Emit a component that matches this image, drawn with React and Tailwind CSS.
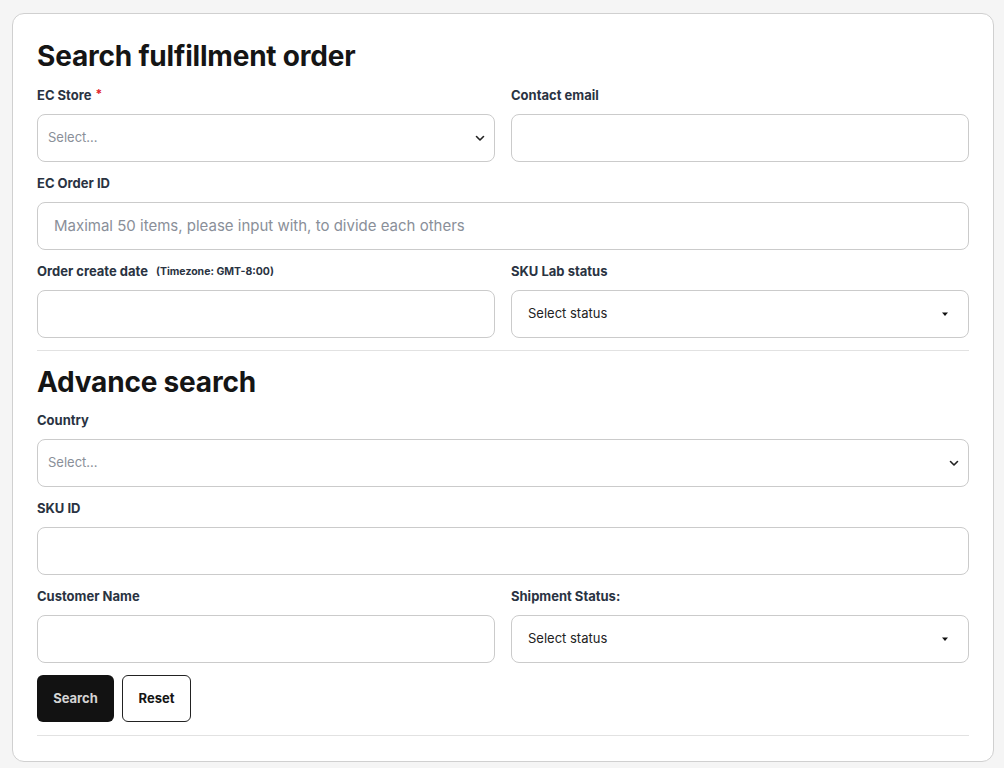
import React from "react";

const font = { fontFamily: "Inter, 'Noto Sans', sans-serif" };

function Label({ children, className = "" }) {
  return (
    <div className={`h-5 pt-px flex items-center text-[13px] font-bold text-[#2a3342] mb-[9px] ${className}`}>
      {children}
    </div>
  );
}

function Chevron() {
  return (
    <svg width="12" height="12" viewBox="0 0 12 12" className="text-[#222]">
      <path d="M2.5 4.5 L6 8 L9.5 4.5" fill="none" stroke="currentColor" strokeWidth="1.6" strokeLinecap="round" strokeLinejoin="round" />
    </svg>
  );
}

function Caret() {
  return (
    <svg width="8" height="6" viewBox="0 0 8 6">
      <path d="M1 1.5 L7 1.5 L4 5 Z" fill="#111" />
    </svg>
  );
}

function SelectBox() {
  return (
    <div className="h-12 rounded-lg border border-[#cbcbcb] bg-white flex items-center justify-between pl-[10px] pr-[8px]">
      <span className="text-[13px] text-[#8a8f99]">Select...</span>
      <Chevron />
    </div>
  );
}

function StatusBox() {
  return (
    <div className="h-12 rounded-lg border border-[#cbcbcb] bg-white flex items-center justify-between pl-4 pr-[19px]">
      <span className="text-[13px] text-[#222]">Select status</span>
      <Caret />
    </div>
  );
}

function InputBox({ placeholder }) {
  return (
    <div className="h-12 rounded-lg border border-[#cbcbcb] bg-white flex items-center px-4">
      {placeholder && <span className="text-[15px] text-[#8a8f99]">{placeholder}</span>}
    </div>
  );
}

function Field({ label, children }) {
  return (
    <div className="flex flex-col mb-[11px]">
      {label}
      {children}
    </div>
  );
}

export default function App() {
  return (
    <div className="min-h-[768px] bg-[#f5f5f5] pt-[13px] pl-3 pr-[10px]" style={font}>
      <div className="bg-white border border-[#d0d0d0] rounded-xl px-6 pt-[24px] pb-[25px] w-[982px]">
        <h1 className="text-[28px] leading-9 font-bold text-[#151515] tracking-[-0.2px] mb-[11px]">Search fulfillment order</h1>
        <div className="grid grid-cols-2 gap-x-4">
          <Field label={<Label>EC Store<span className="text-[#e11d2a] ml-1 text-[12px] -mt-1">*</span></Label>}>
            <SelectBox />
          </Field>
          <Field label={<Label>Contact email</Label>}>
            <InputBox />
          </Field>
          <div className="col-span-2">
            <Field label={<Label>EC Order ID</Label>}>
              <InputBox placeholder="Maximal 50 items, please input with, to divide each others" />
            </Field>
          </div>
          <Field label={<Label>Order create date<span className="ml-2 text-[10.5px]">(Timezone: GMT-8:00)</span></Label>}>
            <InputBox />
          </Field>
          <Field label={<Label>SKU Lab status</Label>}>
            <StatusBox />
          </Field>
        </div>
        <div className="h-px bg-[#e2e2e2] mt-[1px]" />
        <h2 className="text-[28px] leading-9 font-bold text-[#151515] tracking-[-0.2px] mt-[13px] mb-[10px]">Advance search</h2>
        <div className="grid grid-cols-2 gap-x-4">
          <div className="col-span-2">
            <Field label={<Label>Country</Label>}>
              <SelectBox />
            </Field>
          </div>
          <div className="col-span-2">
            <Field label={<Label>SKU ID</Label>}>
              <InputBox />
            </Field>
          </div>
          <Field label={<Label>Customer Name</Label>}>
            <InputBox />
          </Field>
          <Field label={<Label>Shipment Status:</Label>}>
            <StatusBox />
          </Field>
        </div>
        <div className="flex gap-2 mt-[1px]">
          <button className="h-[47px] w-[77px] rounded-md bg-[#121212] text-[#d4d4d4] text-[13px] font-bold">Search</button>
          <button className="h-[47px] w-[69px] rounded-md bg-white border border-[#222] text-[#151515] text-[13px] font-bold">Reset</button>
        </div>
        <div className="h-px bg-[#e2e2e2] mt-[13px]" />
      </div>
    </div>
  );
}
